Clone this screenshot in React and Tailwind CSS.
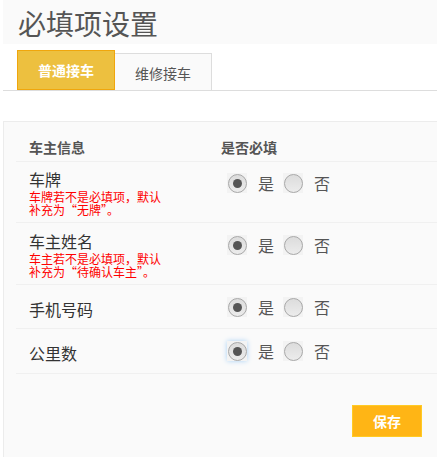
import { useState } from 'react';

const FONT = { fontFamily: '"Noto Sans CJK SC", "Noto Sans", sans-serif' };

const rows = [
  { id: 'plate', label: '车牌', note: ['车牌若不是必填项，默认', '补充为“无牌”。'], h: 'h-[61px]', r: 'mt-[11px]' },
  { id: 'owner', label: '车主姓名', note: ['车主若不是必填项，默认', '补充为“待确认车主”。'], h: 'h-[62px]', r: 'mt-[12px]' },
  { id: 'phone', label: '手机号码', h: 'h-[44px] pt-[4px]', r: 'mt-[8px]' },
  { id: 'mileage', label: '公里数', h: 'h-[45px] pt-[4px]', r: 'mt-[8px]', focus: true },
];

function Radio({ checked, focus, onClick }) {
  return (
    <button
      type="button"
      onClick={onClick}
      className={
        'w-[20px] h-[20px] flex items-center justify-center bg-[#f3f3f3] ' +
        (focus ? 'shadow-[0_0_5px_#a9d1f5]' : '')
      }
    >
      <span className="w-[19px] h-[19px] rounded-full border border-[#a8a8a8] bg-gradient-to-b from-[#dcdcdc] to-[#ececec] flex items-center justify-center">
        {checked && <span className="w-[9px] h-[9px] rounded-full bg-[#555]" />}
      </span>
    </button>
  );
}

export default function App() {
  const [tab, setTab] = useState(0);
  const [values, setValues] = useState({ plate: true, owner: true, phone: true, mileage: true });

  return (
    <div className="w-[437px] h-[457px] overflow-hidden bg-white pl-[3px]" style={FONT}>
      <div className="h-[44px] bg-[#fafafa] pl-[15px] flex items-center">
        <h1 className="text-[28px] leading-none text-[#555] font-normal pt-[2px]">必填项设置</h1>
      </div>

      <div className="h-[47px] flex items-end pl-[14px] border-b border-[#dddddd]">
        <button
          onClick={() => setTab(0)}
          className={
            'w-[98px] text-[14px] flex items-center justify-center border ' +
            (tab === 0
              ? 'h-[40px] bg-[#edc03f] border-[#f0a60c] text-white font-bold'
              : 'h-[37px] bg-[#fafafa] border-[#dddddd] border-b-0 text-[#555]')
          }
        >
          普通接车
        </button>
        <button
          onClick={() => setTab(1)}
          className={
            'w-[97px] text-[14px] flex items-center justify-center border pt-[2px] ' +
            (tab === 1
              ? 'h-[40px] bg-[#edc03f] border-[#f0a60c] text-white font-bold'
              : 'h-[37px] bg-[#fafafa] border-[#dddddd] border-l-0 border-b-0 text-[#555]')
          }
        >
          维修接车
        </button>
      </div>

      <div className="mt-[30px] h-[400px] bg-[#fafafa] border-t border-l border-[#ececec]">
        <div className="ml-[12px] h-[40px] flex items-center pt-[11px] border-b border-[#f0f0f0] text-[14px] font-bold text-[#555]">
          <div className="w-[205px] pl-[13px]">车主信息</div>
          <div>是否必填</div>
        </div>

        {rows.map((r) => (
          <div key={r.id} className={'ml-[12px] flex border-b border-[#f0f0f0] ' + r.h}>
            <div className="w-[211px] pl-[13px] flex flex-col justify-center">
              <div className="text-[16px] leading-[22px] text-[#333]">{r.label}</div>
              {r.note && (
                <div className="text-[12px] leading-[13px] text-[#ff0000]">
                  <div>{r.note[0]}</div>
                  <div>{r.note[1]}</div>
                </div>
              )}
            </div>
            <div className={'flex items-center h-[20px] self-start text-[16px] text-[#555] ' + r.r}>
              <Radio
                checked={values[r.id]}
                focus={r.focus}
                onClick={() => setValues({ ...values, [r.id]: true })}
              />
              <span className="ml-[11px] w-[16px] leading-[20px]">是</span>
              <span className="ml-[9px]">
                <Radio checked={!values[r.id]} onClick={() => setValues({ ...values, [r.id]: false })} />
              </span>
              <span className="ml-[11px] leading-[20px]">否</span>
            </div>
          </div>
        ))}

        <div className="flex justify-end pr-[15px] pt-[31px]">
          <button className="w-[70px] h-[32px] bg-[#ffb515] border border-[#ffca24] text-white text-[14px] font-bold">
            保存
          </button>
        </div>
      </div>
    </div>
  );
}
